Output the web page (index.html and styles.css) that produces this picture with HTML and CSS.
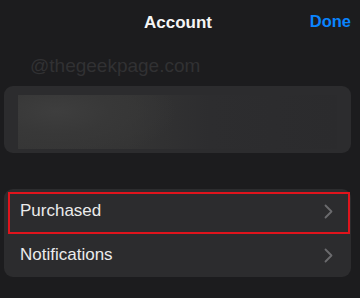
FILE: index.html
```html
<!DOCTYPE html>
<html>
<head>
<meta charset="utf-8">
<link rel="stylesheet" href="styles.css">
</head>
<body>
<div class="screen">
  <header class="nav">
    <span class="nav-title">Account</span>
    <span class="nav-done">Done</span>
  </header>
  <div class="watermark">@thegeekpage.com</div>
  <section class="card profile">
    <div class="blur"></div>
  </section>
  <section class="card list">
    <div class="row">
      <span class="label">Purchased</span>
      <svg class="chev" width="9" height="15" viewBox="0 0 9 15"><path d="M1.5 1.5 L7.5 7.5 L1.5 13.5" fill="none" stroke="#6b6b6e" stroke-width="1.8" stroke-linecap="round" stroke-linejoin="round"/></svg>
      <div class="highlight"></div>
    </div>
    <div class="row">
      <span class="label">Notifications</span>
      <svg class="chev" width="9" height="15" viewBox="0 0 9 15"><path d="M1.5 1.5 L7.5 7.5 L1.5 13.5" fill="none" stroke="#6b6b6e" stroke-width="1.8" stroke-linecap="round" stroke-linejoin="round"/></svg>
    </div>
  </section>
</div>
</body>
</html>
```
FILE: styles.css
```css
html, body {
  margin: 0;
  padding: 0;
  background: #1c1c1e;
}
.screen {
  width: 360px;
  height: 298px;
  overflow: hidden;
  background: #1c1c1e;
  font-family: "Liberation Sans", Arial, sans-serif;
  color: #f2f2f2;
}
.nav {
  position: relative;
  height: 44px;
  display: flex;
  align-items: center;
  justify-content: center;
}
.nav-title {
  font-size: 17px;
  font-weight: bold;
  color: #f5f5f5;
  margin-top: 1px;
  margin-left: -4px;
}
.nav-done {
  position: absolute;
  right: 9px;
  top: 12px;
  font-size: 16.5px;
  font-weight: bold;
  color: #0a84ff;
}
.watermark {
  height: 31px;
  padding-top: 11px;
  padding-left: 30px;
  font-size: 19px;
  line-height: 22px;
  color: #313133;
}
.card {
  margin-left: 4px;
  width: 347px;
  background: #2c2c2e;
  border-radius: 9px;
}
.profile {
  height: 67px;
  padding: 9px 14px 0 14px;
  box-sizing: border-box;
  overflow: hidden;
}
.blur {
  height: 54px;
  background: radial-gradient(ellipse 120px 50px at 12% 30%, #3e3e3e 0%, #383838 45%, rgba(44,44,46,0) 100%),
              linear-gradient(90deg, #353535 0%, #343434 35%, #2d2d2f 60%, #2b2b2d 100%);
}
.list {
  margin-top: 36px;
}
.row {
  position: relative;
  height: 44px;
  display: flex;
  align-items: center;
  justify-content: space-between;
  padding: 0 18px 0 16px;
}
.label {
  font-size: 17px;
  color: #ebebeb;
}
.chev {
  display: block;
}
.highlight {
  position: absolute;
  left: 4px;
  top: 3px;
  width: 338px;
  height: 38px;
  border: 2px solid #e0141c;
}
```
